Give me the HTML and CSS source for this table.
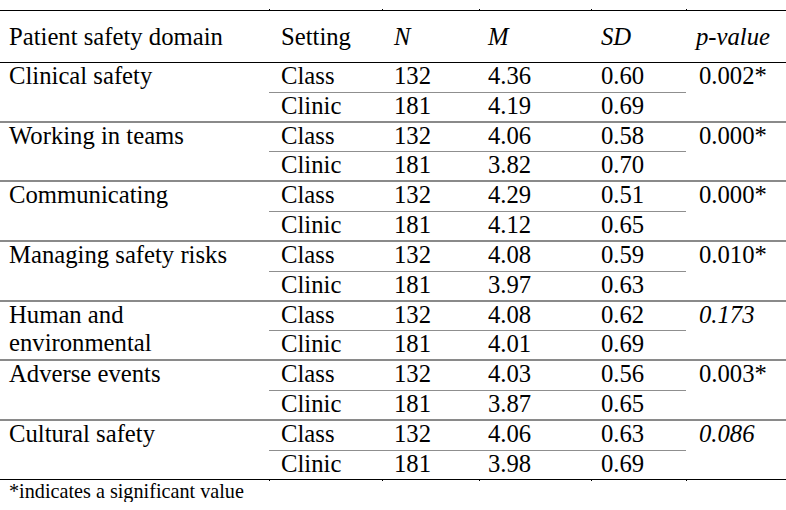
FILE: index.html
```html
<!DOCTYPE html>
<html>
<head>
<meta charset="utf-8">
<link rel="stylesheet" href="styles.css">
</head>
<body>
<div class="tbl">
  <div class="ticks"><span></span><span></span><span></span><span></span><span></span><span></span></div>
  <div class="head">
    <div class="c c1">Patient safety domain</div>
    <div class="c c2">Setting</div>
    <div class="c c3"><i>N</i></div>
    <div class="c c4"><i>M</i></div>
    <div class="c c5"><i>SD</i></div>
    <div class="c c6h"><i>p-value</i></div>
  </div>

  <div class="group">
    <div class="dom">Clinical safety</div>
    <div class="pv">0.002*</div>
    <div class="c c2 a">Class</div><div class="c c3 a">132</div><div class="c c4 a">4.36</div><div class="c c5 a">0.60</div>
    <div class="c c2">Clinic</div><div class="c c3">181</div><div class="c c4">4.19</div><div class="c c5">0.69</div>
  </div>

  <div class="group">
    <div class="dom">Working in teams</div>
    <div class="pv">0.000*</div>
    <div class="c c2 a">Class</div><div class="c c3 a">132</div><div class="c c4 a">4.06</div><div class="c c5 a">0.58</div>
    <div class="c c2">Clinic</div><div class="c c3">181</div><div class="c c4">3.82</div><div class="c c5">0.70</div>
  </div>

  <div class="group">
    <div class="dom">Communicating</div>
    <div class="pv">0.000*</div>
    <div class="c c2 a">Class</div><div class="c c3 a">132</div><div class="c c4 a">4.29</div><div class="c c5 a">0.51</div>
    <div class="c c2">Clinic</div><div class="c c3">181</div><div class="c c4">4.12</div><div class="c c5">0.65</div>
  </div>

  <div class="group">
    <div class="dom">Managing safety risks</div>
    <div class="pv">0.010*</div>
    <div class="c c2 a">Class</div><div class="c c3 a">132</div><div class="c c4 a">4.08</div><div class="c c5 a">0.59</div>
    <div class="c c2">Clinic</div><div class="c c3">181</div><div class="c c4">3.97</div><div class="c c5">0.63</div>
  </div>

  <div class="group">
    <div class="dom">Human and<br>environmental</div>
    <div class="pv"><i>0.173</i></div>
    <div class="c c2 a">Class</div><div class="c c3 a">132</div><div class="c c4 a">4.08</div><div class="c c5 a">0.62</div>
    <div class="c c2">Clinic</div><div class="c c3">181</div><div class="c c4">4.01</div><div class="c c5">0.69</div>
  </div>

  <div class="group">
    <div class="dom">Adverse events</div>
    <div class="pv">0.003*</div>
    <div class="c c2 a">Class</div><div class="c c3 a">132</div><div class="c c4 a">4.03</div><div class="c c5 a">0.56</div>
    <div class="c c2">Clinic</div><div class="c c3">181</div><div class="c c4">3.87</div><div class="c c5">0.65</div>
  </div>

  <div class="group last">
    <div class="dom">Cultural safety</div>
    <div class="pv"><i>0.086</i></div>
    <div class="c c2 a">Class</div><div class="c c3 a">132</div><div class="c c4 a">4.06</div><div class="c c5 a">0.63</div>
    <div class="c c2">Clinic</div><div class="c c3">181</div><div class="c c4">3.98</div><div class="c c5">0.69</div>
  </div>

  <div class="ticks"><span></span><span></span><span></span><span></span><span></span><span></span></div>
  <div class="note">*indicates a significant value</div>
</div>
</body>
</html>
```

FILE: styles.css
```css
body {
  margin: 0;
  background: #ffffff;
  color: #000000;
  font-family: "Liberation Serif", "Times New Roman", serif;
}

.tbl {
  width: 786px;
  padding-top: 9px;
  font-size: 24.7px;
}

.c,
.dom,
.pv,
.note {
  font-family: "Liberation Serif", "Times New Roman", serif;
}

.ticks,
.head,
.group {
  display: grid;
  grid-template-columns: 269px 113px 97px 112px 95px 100px;
}

.ticks {
  height: 1px;
}

.ticks span {
  border-left: 1px solid #000000;
}

.ticks span:first-child {
  border-left: none;
}

.head {
  box-sizing: border-box;
  height: 53px;
  border-top: 1px solid #000000;
  border-bottom: 1px solid #000000;
}

.head .c {
  padding-top: 13px;
}

.c {
  line-height: 26px;
  white-space: nowrap;
}

.c1 { padding-left: 9px; }
.c2 { padding-left: 12px; }
.c3 { padding-left: 12px; }
.c4 { padding-left: 9px; }
.c5 { padding-left: 10px; }
.c6h { padding-left: 10px; }

.group {
  grid-template-rows: 29.5px 28.2px;
  border-bottom: 2px solid #8a8a8a;
}

.group.last {
  border-bottom: 1px solid #000000;
}

.group .c {
  box-sizing: border-box;
}

.group .a {
  border-bottom: 1.5px solid #8f8f8f;
}

.dom {
  grid-column: 1;
  grid-row: 1 / 3;
  padding-left: 9px;
  line-height: 28px;
  margin-top: -1px;
}

.pv {
  grid-column: 6;
  grid-row: 1 / 3;
  padding-left: 13px;
  line-height: 26px;
}

.note {
  font-size: 20.2px;
  line-height: 21px;
  padding-left: 9px;
}
```
